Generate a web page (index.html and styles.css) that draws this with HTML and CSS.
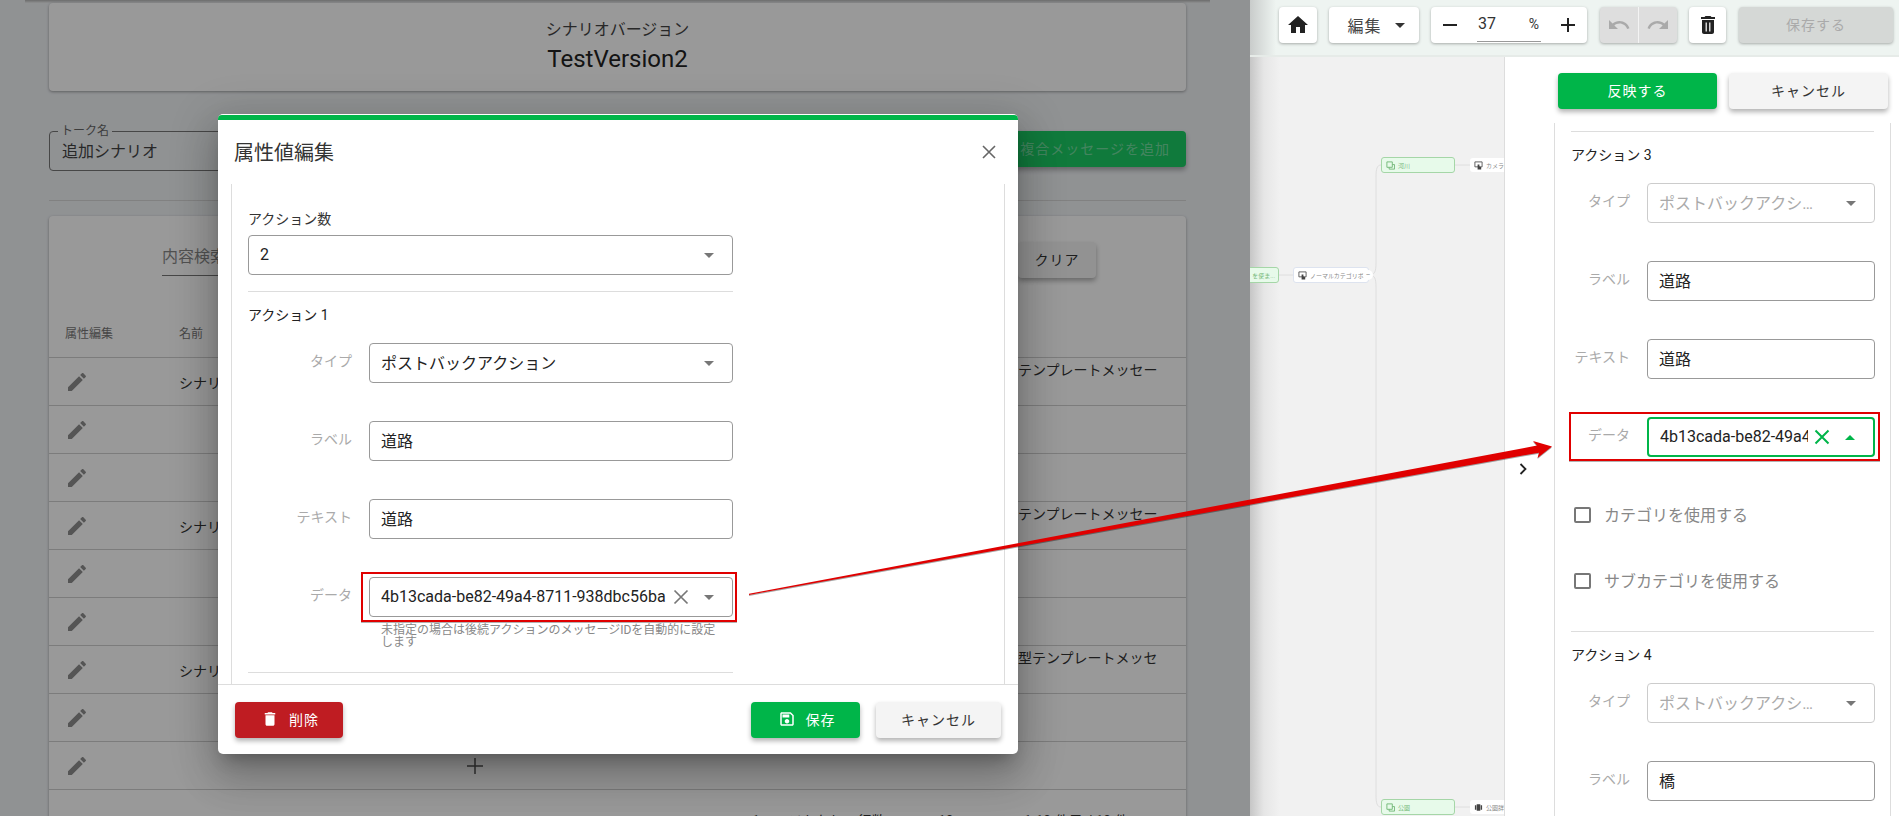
FILE: index.html
```html
<!DOCTYPE html>
<html lang="en">

<head>
    <meta charset="UTF-8">
    <meta name="viewport" content="width=device-width, initial-scale=1.0">
    <title>Scenario editor</title>
    <link rel="stylesheet" href="styles.css">
</head>

<body>
    <div class="leftShot">
        <div class="topShade"></div>
        <div class="card versionCard">
            <div class="versionLabel">シナリオバージョン</div>
            <div class="versionName">TestVersion2</div>
        </div>
        <div class="talkRow">
            <div class="talkField">
                <span class="talkLabel">トーク名</span>
                追加シナリオ
            </div>
            <button type="button" class="btn btnAdd">複合メッセージを追加</button>
        </div>
        <div class="pageRule"></div>
        <div class="card listCard">
            <div class="searchRow">
                <div class="searchInput">内容検索</div>
                <button type="button" class="btn btnClear">クリア</button>
            </div>
            <div class="tableRow tableHead">
                <span>属性編集</span>
                <span>名前</span>
            </div>
            <div class="tableRow">
                <svg class="pencil" viewBox="0 0 24 24"><path d="M3 17.25V21h3.75L17.81 9.94l-3.75-3.75L3 17.25zM20.71 7.04c.39-.39.39-1.02 0-1.41l-2.34-2.34c-.39-.39-1.02-.39-1.41 0l-1.83 1.83 3.75 3.75 1.83-1.83z"/></svg>
                <span>シナリオ</span><span></span>
                <span class="typeCell">確認テンプレートメッセージ</span>
            </div>
            <div class="tableRow">
                <svg class="pencil" viewBox="0 0 24 24"><path d="M3 17.25V21h3.75L17.81 9.94l-3.75-3.75L3 17.25zM20.71 7.04c.39-.39.39-1.02 0-1.41l-2.34-2.34c-.39-.39-1.02-.39-1.41 0l-1.83 1.83 3.75 3.75 1.83-1.83z"/></svg>
            </div>
            <div class="tableRow">
                <svg class="pencil" viewBox="0 0 24 24"><path d="M3 17.25V21h3.75L17.81 9.94l-3.75-3.75L3 17.25zM20.71 7.04c.39-.39.39-1.02 0-1.41l-2.34-2.34c-.39-.39-1.02-.39-1.41 0l-1.83 1.83 3.75 3.75 1.83-1.83z"/></svg>
            </div>
            <div class="tableRow">
                <svg class="pencil" viewBox="0 0 24 24"><path d="M3 17.25V21h3.75L17.81 9.94l-3.75-3.75L3 17.25zM20.71 7.04c.39-.39.39-1.02 0-1.41l-2.34-2.34c-.39-.39-1.02-.39-1.41 0l-1.83 1.83 3.75 3.75 1.83-1.83z"/></svg>
                <span>シナリオ</span><span></span>
                <span class="typeCell">確認テンプレートメッセージ</span>
            </div>
            <div class="tableRow">
                <svg class="pencil" viewBox="0 0 24 24"><path d="M3 17.25V21h3.75L17.81 9.94l-3.75-3.75L3 17.25zM20.71 7.04c.39-.39.39-1.02 0-1.41l-2.34-2.34c-.39-.39-1.02-.39-1.41 0l-1.83 1.83 3.75 3.75 1.83-1.83z"/></svg>
            </div>
            <div class="tableRow">
                <svg class="pencil" viewBox="0 0 24 24"><path d="M3 17.25V21h3.75L17.81 9.94l-3.75-3.75L3 17.25zM20.71 7.04c.39-.39.39-1.02 0-1.41l-2.34-2.34c-.39-.39-1.02-.39-1.41 0l-1.83 1.83 3.75 3.75 1.83-1.83z"/></svg>
            </div>
            <div class="tableRow">
                <svg class="pencil" viewBox="0 0 24 24"><path d="M3 17.25V21h3.75L17.81 9.94l-3.75-3.75L3 17.25zM20.71 7.04c.39-.39.39-1.02 0-1.41l-2.34-2.34c-.39-.39-1.02-.39-1.41 0l-1.83 1.83 3.75 3.75 1.83-1.83z"/></svg>
                <span>シナリオ</span><span></span>
                <span class="typeCell">画像型テンプレートメッセージ</span>
            </div>
            <div class="tableRow">
                <svg class="pencil" viewBox="0 0 24 24"><path d="M3 17.25V21h3.75L17.81 9.94l-3.75-3.75L3 17.25zM20.71 7.04c.39-.39.39-1.02 0-1.41l-2.34-2.34c-.39-.39-1.02-.39-1.41 0l-1.83 1.83 3.75 3.75 1.83-1.83z"/></svg>
            </div>
            <div class="tableRow">
                <svg class="pencil" viewBox="0 0 24 24"><path d="M3 17.25V21h3.75L17.81 9.94l-3.75-3.75L3 17.25zM20.71 7.04c.39-.39.39-1.02 0-1.41l-2.34-2.34c-.39-.39-1.02-.39-1.41 0l-1.83 1.83 3.75 3.75 1.83-1.83z"/></svg>
                <span></span>
                <svg class="plusIcon" viewBox="0 0 16 16"><path d="M7.25 0h1.5v7.25H16v1.5H8.75V16h-1.5V8.75H0v-1.5h7.25z"/></svg>
            </div>
            <div class="pager">
                <span>1ページあたりの行数:</span>
                <span class="pagerSize">10</span>
                <span class="pagerRange">1-10 件目 / 10 件</span>
            </div>
        </div>

        <div class="backdrop"></div>

        <div class="modal">
            <div class="modalBar"></div>
            <div class="modalHead">
                <span class="modalTitle">属性値編集</span>
                <svg class="closeIcon" viewBox="0 0 16 16"><path d="M2 2l12 12M14 2L2 14"/></svg>
            </div>
            <div class="modalBody">
                <div class="fieldTitle">アクション数</div>
                <div class="control">
                    <span class="controlText">2</span>
                    <svg class="caret" viewBox="0 0 10 5"><path d="M0 0l5 5 5-5z"/></svg>
                </div>
                <div class="rule ruleNarrow"></div>
                <div class="actionTitle">アクション 1</div>
                <div class="actionRows modalRows">
                    <div class="formRow">
                        <span class="rowLabel">タイプ</span>
                        <div class="control">
                            <span class="controlText">ポストバックアクション</span>
                            <svg class="caret" viewBox="0 0 10 5"><path d="M0 0l5 5 5-5z"/></svg>
                        </div>
                    </div>
                    <div class="formRow">
                        <span class="rowLabel">ラベル</span>
                        <div class="control"><span class="controlText">道路</span></div>
                    </div>
                    <div class="formRow">
                        <span class="rowLabel">テキスト</span>
                        <div class="control"><span class="controlText">道路</span></div>
                    </div>
                    <div class="formRow dataRow">
                        <span class="rowLabel">データ</span>
                        <div class="control">
                            <span class="controlText">4b13cada-be82-49a4-8711-938dbc56ba</span>
                            <svg class="clearIcon" viewBox="0 0 16 16"><path d="M1.5 1.5l13 13M14.5 1.5l-13 13"/></svg>
                            <svg class="caret" viewBox="0 0 10 5"><path d="M0 0l5 5 5-5z"/></svg>
                        </div>
                        <div class="redBox modalRedBox"></div>
                    </div>
                </div>
                <div class="hint">未指定の場合は後続アクションのメッセージIDを自動的に設定します</div>
                <div class="rule ruleNarrow"></div>
            </div>
            <div class="modalFoot">
                <button type="button" class="btn btnDelete">
                    <svg class="btnIcon" viewBox="0 0 24 24"><path d="M6 19c0 1.1.9 2 2 2h8c1.1 0 2-.9 2-2V7H6v12zM19 4h-3.5l-1-1h-5l-1 1H5v2h14V4z"/></svg>
                    削除
                </button>
                <button type="button" class="btn btnGreen btnSave">
                    <svg class="btnIcon" viewBox="0 0 24 24"><path d="M17 3H5c-1.11 0-2 .9-2 2v14c0 1.1.89 2 2 2h14c1.1 0 2-.9 2-2V7l-4-4zm2 16H5V5h11.17L19 7.83V19zm-7-7c-1.66 0-3 1.34-3 3s1.34 3 3 3 3-1.34 3-3-1.34-3-3-3zM6 6h9v4H6z"/></svg>
                    保存
                </button>
                <button type="button" class="btn btnPlain btnCancel">キャンセル</button>
            </div>
        </div>
    </div>

    <div class="rightShot">
        <div class="toolbar">
            <button type="button" class="tool toolHome">
                <svg class="toolIcon" viewBox="0 0 24 24"><path d="M10 20v-6h4v6h5v-8h3L12 3 2 12h3v8z"/></svg>
            </button>
            <button type="button" class="tool toolEdit">
                編集
                <svg class="editCaret" viewBox="0 0 10 5"><path d="M0 0l5 5 5-5z"/></svg>
            </button>
            <div class="tool toolZoom">
                <svg class="zoomSign" viewBox="0 0 16 16"><path d="M1 7h14v2H1z"/></svg>
                <div class="zoomInput"><span>37</span><span class="zoomPct">%</span></div>
                <svg class="zoomSign" viewBox="0 0 16 16"><path d="M7 1h2v6h6v2H9v6H7V9H1V7h6z"/></svg>
            </div>
            <div class="tool toolHistory">
                <span class="historyBtn"><svg class="toolIcon" viewBox="0 0 24 24"><path d="M12.5 8c-2.65 0-5.05.99-6.9 2.6L2 7v9h9l-3.62-3.62c1.39-1.16 3.16-1.88 5.12-1.88 3.54 0 6.55 2.31 7.6 5.5l2.37-.78C21.08 11.03 17.15 8 12.5 8z"/></svg></span>
                <span class="historyBtn"><svg class="toolIcon" viewBox="0 0 24 24"><path d="M18.4 10.6C16.55 8.99 14.15 8 11.5 8c-4.65 0-8.58 3.03-9.96 7.22L3.9 16c1.05-3.19 4.05-5.5 7.6-5.5 1.95 0 3.73.72 5.12 1.88L13 16h9V7l-3.6 3.6z"/></svg></span>
            </div>
            <button type="button" class="tool toolTrash">
                <svg class="toolIcon" viewBox="0 0 24 24"><path d="M6 19c0 1.1.9 2 2 2h8c1.1 0 2-.9 2-2V7H6v12zM19 4h-3.5l-1-1h-5l-1 1H5v2h14V4z"/><path class="trashLines" d="M10.2 9.5v9M13.8 9.5v9"/></svg>
            </button>
            <button type="button" class="tool toolSave">保存する</button>
        </div>

        <div class="workArea">
            <div class="mapCanvas">
                <svg class="mapLines" viewBox="0 0 254 759">
                    <path d="M29 218h14M119 218c6 0 7-4 7-12V120c0-8 1-12 5-12M205 108h15M119 218c6 0 7 4 7 12V738c0 8 1 12 5 12M205 750h15"/>
                </svg>
                <div class="mapNode nodeGreen nodeStart">を使ま...</div>
                <div class="mapNode nodeWhite nodeNormal">
                    <svg class="nodeIcon" viewBox="0 0 10 10"><path class="iconOutline" d="M1 1h8v5.500H1z"/><path d="M4 4h2v2l2 1v2.500H4z"/></svg>
                    ノーマルカテゴリボ...
                </div>
                <span class="collapseDot">–</span>
                <div class="mapNode nodeGreen nodeRiver">
                    <svg class="nodeIcon nodeIconLine" viewBox="0 0 10 10"><path d="M1 1h6v6H1zM3.500 7v2h6V4H7"/></svg>
                    河川
                </div>
                <div class="mapNode nodePlain nodeCamera">
                    <svg class="nodeIcon" viewBox="0 0 10 10"><path class="iconOutline" d="M1 1h8v5.500H1z"/><path d="M4 4h2v2l2 1v2.500H4z"/></svg>
                    カメラ詳細
                </div>
                <div class="mapNode nodeGreen nodePark">
                    <svg class="nodeIcon nodeIconLine" viewBox="0 0 10 10"><path d="M1 1h6v6H1zM3.500 7v2h6V4H7"/></svg>
                    公園
                </div>
                <div class="mapNode nodePlain nodeParkInfo">
                    <svg class="nodeIcon" viewBox="0 0 10 10"><path d="M3 1.500h4v7H3zM1 2.500h1.500v5H1zM7.500 2.500H9v5H7.500z"/></svg>
                    公園詳細
                </div>
            </div>

            <div class="sidePanel">
                <div class="toggleCol">
                    <svg class="chevron" viewBox="0 0 8 12"><path d="M1.500 1l5 5-5 5"/></svg>
                </div>
                <div class="panelMain">
                    <div class="panelButtons">
                        <button type="button" class="btn btnGreen btnApply">反映する</button>
                        <button type="button" class="btn btnPlain btnApply">キャンセル</button>
                    </div>
                    <div class="panelScroll">
                        <div class="rule"></div>
                        <div class="actionTitle">アクション 3</div>
                        <div class="actionRows panelRows">
                            <div class="formRow">
                                <span class="rowLabel">タイプ</span>
                                <div class="control controlDisabled">
                                    <span class="controlText">ポストバックアクション</span>
                                    <svg class="caret" viewBox="0 0 10 5"><path d="M0 0l5 5 5-5z"/></svg>
                                </div>
                            </div>
                            <div class="formRow">
                                <span class="rowLabel">ラベル</span>
                                <div class="control"><span class="controlText">道路</span></div>
                            </div>
                            <div class="formRow">
                                <span class="rowLabel">テキスト</span>
                                <div class="control"><span class="controlText">道路</span></div>
                            </div>
                            <div class="formRow dataRow">
                                <span class="rowLabel">データ</span>
                                <div class="control controlFocus">
                                    <span class="controlText">4b13cada-be82-49a4-8711-938dbc56ba</span>
                                    <svg class="clearIcon" viewBox="0 0 16 16"><path d="M1.5 1.5l13 13M14.5 1.5l-13 13"/></svg>
                                    <svg class="caret caretUp" viewBox="0 0 10 5"><path d="M0 5l5-5 5 5z"/></svg>
                                </div>
                                <div class="redBox panelRedBox"></div>
                            </div>
                        </div>
                        <div class="checkRow"><span class="checkBox"></span>カテゴリを使用する</div>
                        <div class="checkRow"><span class="checkBox"></span>サブカテゴリを使用する</div>
                        <div class="rule ruleAfterChecks"></div>
                        <div class="actionTitle">アクション 4</div>
                        <div class="actionRows panelRows">
                            <div class="formRow">
                                <span class="rowLabel">タイプ</span>
                                <div class="control controlDisabled">
                                    <span class="controlText">ポストバックアクション</span>
                                    <svg class="caret" viewBox="0 0 10 5"><path d="M0 0l5 5 5-5z"/></svg>
                                </div>
                            </div>
                            <div class="formRow">
                                <span class="rowLabel">ラベル</span>
                                <div class="control"><span class="controlText">橋</span></div>
                            </div>
                        </div>
                    </div>
                </div>
            </div>
        </div>
    </div>

    <svg class="arrow" viewBox="0 0 1899 816">
        <polygon points="749,593.7 1537,445.5 1533,441 1552,446.5 1537.500,458 1539,452.700 749,595"/>
    </svg>
</body>

</html>
```

FILE: styles.css
```css
* {
    box-sizing: border-box;
}

html,
body {
    margin: 0;
    height: 816px;
    overflow: hidden;
}

body {
    position: relative;
    display: flex;
    font-family: Roboto, 'Noto Sans CJK JP', sans-serif;
    color: #222;
}

button {
    font-family: inherit;
    border: none;
    padding: 0;
}

/* left screenshot, dimmed behind the dialog */

.leftShot {
    position: relative;
    width: 1250px;
    height: 816px;
    padding: 0 64px 0 49px;
    overflow: hidden;
    background-color: #f0f3f6;
}

.topShade {
    height: 3px;
    margin: 0 -24px;
    background: linear-gradient(#b4b4b4, #eef0f2);
}

.card {
    background-color: #fff;
    border-radius: 4px;
    box-shadow: 0 1px 3px rgba(0, 0, 0, 0.35);
}

.versionCard {
    height: 88px;
    padding-top: 17px;
    text-align: center;
}

.versionLabel {
    font-size: 16px;
    line-height: 20px;
    color: #444;
}

.versionName {
    font-size: 24px;
    line-height: 32px;
    margin-top: 3px;
}

.talkRow {
    display: flex;
    justify-content: space-between;
    align-items: flex-start;
    margin-top: 40px;
}

.talkField {
    position: relative;
    width: 400px;
    height: 40px;
    padding: 9px 12px;
    border: 1px solid #777;
    border-radius: 4px;
    font-size: 16px;
    line-height: 22px;
    color: #444;
}

.talkLabel {
    position: absolute;
    left: 8px;
    top: -9px;
    padding: 0 3px;
    font-size: 12px;
    line-height: 16px;
    color: #666;
    background-color: #f0f3f6;
}

.btn {
    display: flex;
    align-items: center;
    justify-content: center;
    gap: 10px;
    height: 36px;
    padding-bottom: 2px;
    border-radius: 4px;
    font-size: 14px;
    letter-spacing: 1px;
    box-shadow: 0 3px 5px rgba(0, 0, 0, 0.3);
}

.btnAdd {
    width: 300px;
    justify-content: flex-end;
    padding-right: 16px;
    background-color: #1bcb64;
    color: rgba(255, 255, 255, 0.4);
}

.pageRule {
    height: 1px;
    margin-top: 29px;
    background-color: #d8d8d8;
}

.listCard {
    height: 640px;
    margin-top: 15px;
}

.searchRow {
    display: flex;
    justify-content: space-between;
    align-items: flex-start;
    padding: 26px 90px 0 113px;
}

.searchInput {
    width: 500px;
    height: 34px;
    border-bottom: 1px solid #777;
    font-size: 16px;
    line-height: 30px;
    color: #888;
}

.btnClear {
    width: 78px;
    background-color: #f4f4f4;
    color: #333;
}

.tableRow {
    display: grid;
    grid-template-columns: 130px 280px 1fr 168px;
    align-items: center;
    height: 48px;
    padding-right: 28px;
    border-bottom: 1px solid #cfcfcf;
    font-size: 14px;
    color: #333;
}

.tableRow>:first-child {
    margin-left: 16px;
}

.tableHead {
    height: 50px;
    margin-top: 30px;
    font-size: 12px;
    color: #777;
}

.pencil {
    width: 24px;
    height: 24px;
    fill: #8e8e8e;
}

.typeCell {
    margin-top: -4px;
    line-height: 20px;
    line-break: anywhere;
}

.plusIcon {
    width: 16px;
    height: 16px;
    margin-left: 8px;
    fill: #555;
}

.pager {
    display: flex;
    margin: 21px 0 0 703px;
    font-size: 14px;
    line-height: 20px;
    color: #333;
}

.pagerSize {
    margin-left: 49px;
}

.pagerRange {
    margin-left: 70px;
}

.backdrop {
    position: absolute;
    inset: 0;
    background-color: rgba(0, 0, 0, 0.4);
}

/* dialog */

.modal {
    position: absolute;
    left: 218px;
    top: 114px;
    display: flex;
    flex-direction: column;
    width: 800px;
    height: 640px;
    padding-top: 1px;
    border-radius: 5px;
    background-color: #fff;
    box-shadow: 0 11px 15px -7px rgba(0, 0, 0, 0.25), 0 24px 38px 3px rgba(0, 0, 0, 0.16), 0 9px 46px 8px rgba(0, 0, 0, 0.14);
}

.modalBar {
    height: 5px;
    border-radius: 4px 4px 0 0;
    background-color: #00b549;
}

.modalHead {
    display: flex;
    justify-content: space-between;
    align-items: center;
    height: 64px;
    padding: 0 21px 0 16px;
}

.modalTitle {
    margin-bottom: 2px;
    font-size: 20px;
    color: #333;
}

.closeIcon {
    width: 16px;
    height: 16px;
    fill: none;
    stroke: #666;
    stroke-width: 1.6;
}

.modalBody {
    flex: 1;
    margin: 0 13px;
    padding: 25px 0 0 16px;
    overflow: hidden;
    border-left: 1px solid #ddd;
    border-right: 1px solid #ddd;
}

.fieldTitle {
    font-size: 14px;
    line-height: 20px;
    margin-bottom: 6px;
    color: #333;
}

.modalBody .control,
.modalBody .rule {
    width: 485px;
}

.rule {
    height: 1px;
    background-color: #ddd;
}

.ruleNarrow {
    margin-top: 16px;
}

.actionTitle {
    margin: 13px 0 18px;
    font-size: 14px;
    line-height: 20px;
    color: #222;
}

.actionRows {
    display: flex;
    flex-direction: column;
    gap: 38px;
}

.formRow {
    position: relative;
    display: flex;
    align-items: center;
    gap: 17px;
}

.rowLabel {
    flex-shrink: 0;
    padding-bottom: 4px;
    font-size: 14px;
    line-height: 20px;
    text-align: right;
    white-space: nowrap;
    color: #aaa;
}

.modalRows {
    width: 485px;
}

.modalRows .rowLabel {
    width: 104px;
}

.modalBody .modalRows .control {
    width: 364px;
}

.panelRows .rowLabel {
    width: 59px;
}

.control {
    display: flex;
    align-items: center;
    flex: none;
    height: 40px;
    padding: 0 18px 0 11px;
    border: 1px solid #999;
    border-radius: 4px;
    background-color: #fff;
    font-size: 16px;
    color: #222;
}

.controlText {
    flex: 1;
    min-width: 0;
    padding-bottom: 2px;
    white-space: nowrap;
    overflow: hidden;
}

.caret {
    flex: none;
    width: 10px;
    height: 5px;
    margin-left: 15px;
    fill: #777;
}

.clearIcon {
    flex: none;
    width: 16px;
    height: 16px;
    margin-left: 6px;
    fill: none;
    stroke: #777;
    stroke-width: 1.7;
}

.controlDisabled {
    border-color: #ccc;
    color: #aaa;
}

.controlDisabled .controlText {
    text-overflow: ellipsis;
}

.controlDisabled .caret {
    margin-left: 30px;
}

.controlFocus {
    border: 2px solid #00b549;
}

.controlFocus .clearIcon {
    stroke: #00b549;
    stroke-width: 2;
}

.caretUp {
    fill: #00b549;
}

.redBox {
    position: absolute;
    border: 2px solid #e00000;
    box-shadow: 0 1px 0 rgba(0, 0, 0, 0.3);
    pointer-events: none;
}

.modalRedBox {
    left: 113px;
    right: -4px;
    top: -5px;
    bottom: -5px;
}

.panelRedBox {
    left: -2px;
    right: -6px;
    top: -5px;
    bottom: -4px;
}

.hint {
    width: 344px;
    margin: 7px 0 24px 133px;
    font-size: 12px;
    line-height: 12px;
    color: #888;
}

.modalFoot {
    display: flex;
    align-items: flex-start;
    gap: 16px;
    height: 70px;
    padding: 17px 17px 0;
    border-top: 1px solid #ddd;
}

.btnDelete {
    width: 108px;
    margin-right: auto;
    padding-left: 2px;
    background-color: #bf1c22;
    color: #fff;
}

.btnIcon {
    width: 18px;
    height: 18px;
    fill: #fff;
}

.btnGreen {
    background-color: #00b549;
    color: #fff;
}

.btnPlain {
    background-color: #f4f4f4;
    color: #333;
}

.btnSave {
    width: 109px;
    padding-left: 2px;
}

.btnCancel {
    width: 125px;
}

/* right screenshot */

.rightShot {
    display: flex;
    flex-direction: column;
    width: 649px;
    height: 816px;
}

.toolbar {
    display: flex;
    align-items: center;
    height: 57px;
    padding: 0 6px 5px 29px;
    border-bottom: 2px solid #e6ebe8;
    background: linear-gradient(to right, #c9cccb, #eef4f1 26px);
}

.tool {
    display: flex;
    align-items: center;
    justify-content: center;
    height: 36px;
    border-radius: 4px;
    background-color: #fff;
    box-shadow: 0 1px 3px rgba(0, 0, 0, 0.3);
    font-size: 16px;
    color: #444;
}

.toolIcon {
    width: 24px;
    height: 24px;
    fill: #222;
}

.toolHome {
    width: 38px;
    margin-right: 12px;
}

.toolEdit {
    width: 90px;
    margin-right: 12px;
    gap: 13px;
    padding-left: 4px;
    letter-spacing: 1px;
}

.editCaret {
    width: 10px;
    height: 5px;
    fill: #333;
}

.toolZoom {
    justify-content: space-between;
    width: 156px;
    margin-right: 13px;
    padding: 0 11px 0 11px;
}

.zoomSign {
    width: 16px;
    height: 16px;
    fill: #222;
}

.zoomInput {
    display: flex;
    justify-content: space-between;
    width: 64px;
    height: 33px;
    padding: 5px 2px 0 1px;
    border-bottom: 1px solid #999;
    font-size: 16px;
    line-height: 20px;
    color: #333;
}

.zoomPct {
    font-size: 14px;
}

.toolHistory {
    width: 77px;
    margin-right: 12px;
    background-color: #dedede;
}

.historyBtn {
    display: flex;
    flex: 1;
    align-items: center;
    justify-content: center;
    height: 36px;
}

.historyBtn:first-child {
    border-right: 1px solid #f4f4f4;
}

.historyBtn .toolIcon {
    fill: #aaa;
}

.toolTrash {
    width: 37px;
    margin-right: 13px;
}

.trashLines {
    fill: none;
    stroke: #fff;
    stroke-width: 1.2;
}

.toolSave {
    width: 154px;
    padding-bottom: 2px;
    background-color: #d5d8d6;
    font-size: 14px;
    letter-spacing: 1px;
    color: #aaa;
}

.workArea {
    display: flex;
    flex: 1;
    min-height: 0;
}

/* mind map canvas */

.mapCanvas {
    position: relative;
    width: 254px;
    overflow: hidden;
    background: linear-gradient(to right, #c6c6c6, #e6e6e6 14px, #f1f1f1 30px);
}

.mapLines {
    position: absolute;
    left: 0;
    top: 0;
    width: 254px;
    height: 759px;
    fill: none;
    stroke: #dedede;
}

.mapNode {
    position: absolute;
    display: flex;
    align-items: center;
    gap: 3px;
    height: 16px;
    padding-left: 4px;
    border-radius: 3px;
    font-size: 6px;
    white-space: nowrap;
    overflow: hidden;
}

.nodeGreen {
    border: 1px solid #a5d6a7;
    background-color: #e7faea;
    color: #77b97c;
}

.nodeWhite {
    border: 1px solid #dde3ef;
    background-color: #fff;
    color: #888;
}

.nodePlain {
    height: 14px;
    background-color: #fff;
    color: #888;
}

.nodeIcon {
    flex: none;
    width: 9px;
    height: 9px;
    fill: #444;
}

.iconOutline {
    fill: none;
    stroke: #555;
    stroke-width: 1;
}

.nodeIconLine {
    fill: none;
    stroke: #6fb574;
    stroke-width: 1;
}

.collapseDot {
    position: absolute;
    left: 113px;
    top: 213px;
    width: 10px;
    height: 10px;
    border-radius: 50%;
    background-color: #fff;
    font-size: 7px;
    line-height: 10px;
    text-align: center;
    color: #888;
}

.nodeStart {
    left: -12px;
    top: 210px;
    width: 41px;
    justify-content: flex-end;
    padding-right: 3px;
}

.nodeNormal {
    left: 43px;
    top: 210px;
    width: 76px;
}

.nodeRiver {
    left: 131px;
    top: 100px;
    width: 74px;
}

.nodeCamera {
    left: 220px;
    top: 101px;
    width: 50px;
}

.nodePark {
    left: 131px;
    top: 742px;
    width: 74px;
}

.nodeParkInfo {
    left: 220px;
    top: 743px;
    width: 50px;
}

/* side panel */

.sidePanel {
    display: flex;
    flex: 1;
    min-width: 0;
    border-left: 1px solid #ddd;
    background-color: #fff;
}

.toggleCol {
    width: 49px;
    padding: 403px 0 0 14px;
}

.chevron {
    width: 8px;
    height: 12px;
    fill: none;
    stroke: #222;
    stroke-width: 1.8;
}

.panelMain {
    display: flex;
    flex: 1;
    flex-direction: column;
    min-width: 0;
    padding-right: 8px;
}

.panelButtons {
    display: flex;
    gap: 12px;
    padding: 16px 0 14px 4px;
    margin-right: -5px;
}

.btnApply {
    width: 159px;
}

.panelScroll {
    flex: 1;
    min-height: 0;
    padding: 8px 16px 0;
    overflow: hidden;
    border-left: 1px solid #ddd;
    border-right: 1px solid #ddd;
}

.panelRows .control {
    width: 228px;
}

.checkRow {
    display: flex;
    align-items: center;
    gap: 13px;
    height: 16px;
    margin-top: 50px;
    padding: 0 0 2px 3px;
    font-size: 16px;
    color: #888;
}

.checkBox {
    flex: none;
    width: 17px;
    height: 16px;
    margin-top: 2px;
    border: 2px solid #777;
    border-radius: 2px;
}

.ruleAfterChecks {
    margin-top: 42px;
}

/* annotation arrow drawn on top of both screenshots */

.arrow {
    position: absolute;
    left: 0;
    top: 0;
    width: 1899px;
    height: 816px;
    fill: #e00000;
    pointer-events: none;
    filter: drop-shadow(0 1px 0 rgba(0, 0, 0, 0.35));
}
```
